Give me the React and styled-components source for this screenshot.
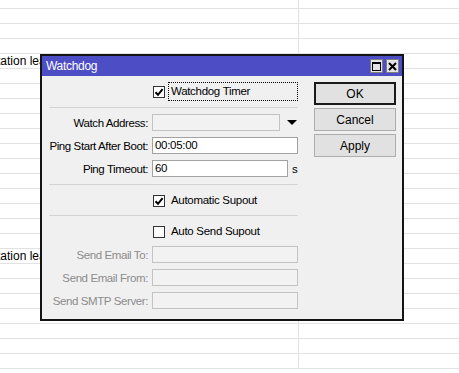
import React from 'react';
import styled, { createGlobalStyle } from 'styled-components';

const Global = createGlobalStyle`
  html, body { margin: 0; padding: 0; background: #fff; overflow: hidden; }
  body { font-family: "Liberation Sans", Arial, sans-serif; }
  * { box-sizing: border-box; }
`;

const Desktop = styled.div`
  position: relative;
  width: 459px;
  height: 373px;
  overflow: hidden;
  background: #fff;
`;

const Table = styled.div`
  display: flex;
  flex-direction: column;
`;

const TRow = styled.div`
  display: flex;
  flex-shrink: 0;
  height: ${(p) => p.$h}px;
  border-bottom: 1px solid #e2e2e2;
  box-sizing: content-box;
`;

const TCell = styled.div`
  width: 299px;
  flex-shrink: 0;
  border-right: 1px solid #e2e2e2;
  font-size: 12px;
  line-height: 14px;
  color: #000;
  white-space: nowrap;
  overflow: hidden;
`;

const TCellClip = styled.div`
  width: 40px;
  overflow: hidden;
`;

const TCellText = styled.span`
  display: block;
  margin-left: -3px;
`;

const Window = styled.div`
  position: absolute;
  left: 40px;
  top: 54px;
  width: 364px;
  height: 267px;
  border: 2px solid #141414;
  background: #f0f0f0;
  display: flex;
  flex-direction: column;
  font-size: 11.5px;
`;

const TitleBar = styled.div`
  height: 20px;
  background: #4d4dc6;
  display: flex;
  align-items: center;
  padding: 0 3px 0 4px;
  color: #fff;
  font-size: 12px;
  letter-spacing: -0.3px;
`;

const TitleText = styled.span`
  flex: 1;
`;

const TitleButtons = styled.div`
  display: flex;
  gap: 3px;
`;

const TitleButton = styled.div`
  width: 13px;
  height: 14px;
  background: #e4e4e4;
  border: 1px solid #7e7e7e;
  display: flex;
  align-items: center;
  justify-content: center;
`;

const Body = styled.div`
  flex: 1;
  display: flex;
  gap: 16px;
  padding: 6px 6px 0 7px;
`;

const Form = styled.div`
  width: 249px;
  display: flex;
  flex-direction: column;
`;

const Grid = styled.div`
  display: grid;
  grid-template-columns: 99px 1fr;
  column-gap: 4px;
  row-gap: 6px;
  align-items: center;
  margin-top: ${(p) => p.$mt || 0}px;
`;

const Label = styled.div`
  text-align: right;
  white-space: nowrap;
  letter-spacing: -0.4px;
  color: ${(p) => (p.$disabled ? '#8c8c8c' : '#000')};
`;

const FieldWrap = styled.div`
  display: flex;
  align-items: center;
  height: 17px;
`;

const Input = styled.div`
  width: ${(p) => p.$w}px;
  height: 17px;
  border: 1px solid ${(p) => (p.$disabled ? '#c3c3c3' : '#a2a2a2')};
  background: ${(p) => (p.$disabled ? '#f2f2f2' : '#fff')};
  padding: 0 2px;
  line-height: 15px;
  color: #000;
  letter-spacing: -0.3px;
`;

const Unit = styled.span`
  margin-left: 4px;
  color: #000;
`;

const Arrow = styled.span`
  margin-left: 7px;
  width: 0;
  height: 0;
  border-left: 5px solid transparent;
  border-right: 5px solid transparent;
  border-top: 5px solid #000;
`;

const CheckLine = styled.div`
  display: flex;
  align-items: center;
  height: 19px;
  padding-left: 104px;
`;

const Box = styled.span`
  width: 12px;
  height: 12px;
  flex-shrink: 0;
  border: 1px solid #333;
  background: #fff;
  display: flex;
  align-items: center;
  justify-content: center;
`;

const CheckLabel = styled.span`
  margin-left: 3px;
  padding-left: 2px;
  height: 19px;
  line-height: 17px;
  letter-spacing: -0.3px;
  color: #000;
  border: 1px dotted ${(p) => (p.$focus ? '#000' : 'transparent')};
  flex: ${(p) => (p.$focus ? 1 : 'none')};
`;

const Separator = styled.div`
  height: 1px;
  background: #d3d3d3;
  margin: ${(p) => p.$m};
`;

const Buttons = styled.div`
  width: 82px;
  display: flex;
  flex-direction: column;
  gap: 3px;
`;

const Button = styled.div`
  height: 23px;
  background: #e1e1e1;
  border: ${(p) => (p.$default ? '2px solid #1a1a1a' : '1px solid #adadad')};
  display: flex;
  align-items: center;
  justify-content: center;
  font-size: 12px;
  color: #000;
`;

const Check = () => (
  <svg width="10" height="10" viewBox="0 0 10 10">
    <path d="M1.5 5.2 L4 7.8 L8.6 2.2" fill="none" stroke="#000" strokeWidth="2" />
  </svg>
);

const CheckBox = ({ checked, label, focus }) => (
  <CheckLine>
    <Box>{checked && <Check />}</Box>
    <CheckLabel $focus={focus}>{label}</CheckLabel>
  </CheckLine>
);

const rows = Array.from({ length: 25 }, (_, i) => i);

export default function App() {
  return (
    <Desktop>
      <Global />
      <Table>
        {rows.map((i) => (
          <TRow key={i} $h={i === 0 ? 8 : 14}>
            <TCell>
              {(i === 4 || i === 17) && (
                <TCellClip>
                  <TCellText>tation leases</TCellText>
                </TCellClip>
              )}
            </TCell>
          </TRow>
        ))}
      </Table>
      <Window>
        <TitleBar>
          <TitleText>Watchdog</TitleText>
          <TitleButtons>
            <TitleButton>
              <svg width="9" height="9" viewBox="0 0 9 9">
                <rect x="0.5" y="0.5" width="8" height="8" fill="none" stroke="#000" />
                <line x1="0" y1="1.5" x2="9" y2="1.5" stroke="#000" />
              </svg>
            </TitleButton>
            <TitleButton>
              <svg width="9" height="9" viewBox="0 0 9 9">
                <path d="M1 1 L8 8 M8 1 L1 8" stroke="#000" strokeWidth="2" />
              </svg>
            </TitleButton>
          </TitleButtons>
        </TitleBar>
        <Body>
          <Form>
            <CheckBox checked focus label="Watchdog Timer" />
            <Separator $m="6px 0 6px" />
            <Grid>
              <Label>Watch Address:</Label>
              <FieldWrap>
                <Input $w={128} $disabled />
                <Arrow />
              </FieldWrap>
              <Label>Ping Start After Boot:</Label>
              <FieldWrap>
                <Input $w={146}>00:05:00</Input>
              </FieldWrap>
              <Label>Ping Timeout:</Label>
              <FieldWrap>
                <Input $w={136}>60</Input>
                <Unit>s</Unit>
              </FieldWrap>
            </Grid>
            <Separator $m="7px 0 6px" />
            <CheckBox checked label="Automatic Supout" />
            <Separator $m="5px 0 6px" />
            <CheckBox label="Auto Send Supout" />
            <Grid $mt={5}>
              <Label $disabled>Send Email To:</Label>
              <FieldWrap>
                <Input $w={146} $disabled />
              </FieldWrap>
              <Label $disabled>Send Email From:</Label>
              <FieldWrap>
                <Input $w={146} $disabled />
              </FieldWrap>
              <Label $disabled>Send SMTP Server:</Label>
              <FieldWrap>
                <Input $w={146} $disabled />
              </FieldWrap>
            </Grid>
          </Form>
          <Buttons>
            <Button $default>OK</Button>
            <Button>Cancel</Button>
            <Button>Apply</Button>
          </Buttons>
        </Body>
      </Window>
    </Desktop>
  );
}
